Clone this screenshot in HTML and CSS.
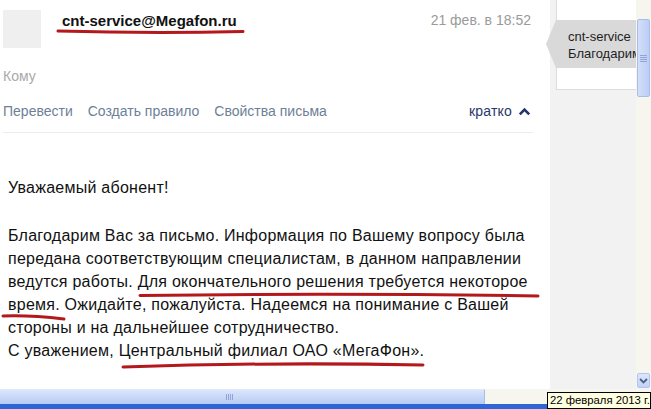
FILE: index.html
```html
<!DOCTYPE html>
<html lang="ru">
<head>
<meta charset="utf-8">
<title>Письмо</title>
<link rel="stylesheet" href="styles.css">
</head>
<body>
<div class="screen">
  <div class="viewport">
    <main class="main">
      <header class="head">
        <div class="avatar"></div>
        <div class="from">cnt-service@Megafon.ru</div>
        <div class="date">21 фев. в 18:52</div>
      </header>
      <div class="to">Кому</div>
      <nav class="actions">
        <span class="link">Перевести</span>
        <span class="link">Создать правило</span>
        <span class="link">Свойства письма</span>
        <span class="brief">кратко
          <svg class="chev" width="13" height="9" viewBox="0 0 13 9"><path d="M1.8 7.4 L6.5 2.6 L11.2 7.4" fill="none" stroke="#24356e" stroke-width="2.6"/></svg>
        </span>
      </nav>
      <div class="letter">
        <p class="greet">Уважаемый абонент!</p>
        <p class="text">Благодарим Вас за письмо. Информация по Вашему вопросу была передана соответствующим специалистам, в данном направлении ведутся работы. Для окончательного решения требуется некоторое время. Ожидайте, пожалуйста. Надеемся на понимание с Вашей стороны и на дальнейшее сотрудничество.<br>С уважением, Центральный филиал ОАО «МегаФон».</p>
      </div>
    </main>
    <aside class="side">
      <div class="preview"></div>
      <div class="bubble">
        <div class="bubble-line">cnt-service</div>
        <div class="bubble-line">Благодарим</div>
      </div>
    </aside>
    <div class="vscroll">
      <div class="vthumb"><span></span><span></span><span></span><span></span></div>
      <div class="vdown">
        <svg width="9" height="6" viewBox="0 0 9 6"><path d="M1 1 L4.5 4.5 L8 1" fill="none" stroke="#4d6185" stroke-width="1.8"/></svg>
      </div>
    </div>
  </div>
  <div class="hscroll">
    <div class="hthumb"><span></span><span></span><span></span><span></span></div>
    <div class="htrack"></div>
  </div>
  <div class="taskbar"></div>
</div>
<div class="tip">22 февраля 2013 г.</div>
<svg class="marks" width="651" height="409" viewBox="0 0 651 409">
  <g fill="none" stroke="#b3191c" stroke-width="3" stroke-linecap="round">
    <path d="M58 31 Q150 33.5 243 31.5"/>
    <path d="M140 295.5 Q340 293 538 296"/>
    <path d="M3 316 Q30 315 64 319"/>
    <path d="M123 367 Q270 362 423 365"/>
  </g>
</svg>
</body>
</html>
```
FILE: styles.css
```css
html, body {
  margin: 0;
  padding: 0;
}
body {
  width: 651px;
  height: 409px;
  overflow: hidden;
  position: relative;
  background: #fff;
  font-family: "Liberation Sans", Arial, sans-serif;
  color: #111;
}
.screen {
  display: flex;
  flex-direction: column;
  height: 409px;
}
.viewport {
  display: flex;
  height: 389px;
}
.main {
  width: 550px;
  flex: none;
  background: #fff;
}
.head {
  display: flex;
  height: 58px;
  padding-right: 19px;
}
.avatar {
  width: 38px;
  height: 38px;
  margin: 10px 0 0 3px;
  background: #efefef;
  flex: none;
}
.from {
  margin: 12px 0 0 21px;
  font-weight: bold;
  font-size: 15px;
  line-height: 17px;
  color: #111;
}
.date {
  margin: 12px 0 0 auto;
  font-size: 14px;
  line-height: 17px;
  color: #9a9a9a;
}
.to {
  margin-top: 9px;
  padding-left: 3px;
  font-size: 14px;
  line-height: 18px;
  color: #a9a9a9;
}
.actions {
  display: flex;
  align-items: center;
  gap: 15px;
  margin: 17px 17px 0 3px;
  height: 18px;
  padding-bottom: 12px;
  border-bottom: 1px solid #ececec;
  font-size: 14px;
  line-height: 18px;
}
.link {
  color: #6e8097;
}
.brief {
  margin-left: auto;
  margin-right: 2px;
  color: #2a386b;
  display: flex;
  align-items: center;
  gap: 6px;
  letter-spacing: 0.2px;
}
.letter {
  padding: 0 0 0 8px;
  margin-top: 43px;
  font-size: 16px;
  line-height: 23px;
  letter-spacing: 0.25px;
  color: #111;
}
.letter p {
  margin: 0;
}
.text {
  margin-top: 25px !important;
  width: 540px;
}
.side {
  width: 86px;
  flex: none;
  background: #f2f2f2;
  position: relative;
}
.preview {
  margin-left: 6px;
  height: 89px;
  background: #fff;
  border-left: 1px solid #dcdcdc;
  border-bottom: 1px solid #dcdcdc;
}
.bubble {
  position: absolute;
  left: 6px;
  top: 20px;
  width: 80px;
  height: 48px;
  background: #d9d9d9;
  box-sizing: border-box;
  padding: 8px 0 0 12px;
  font-size: 13px;
  line-height: 17px;
  color: #1e1e1e;
  white-space: nowrap;
}
.bubble::before {
  content: "";
  position: absolute;
  left: -10px;
  top: 0;
  border-style: solid;
  border-width: 24px 10px 24px 0;
  border-color: transparent #d9d9d9 transparent transparent;
}
.bubble-line {
  overflow: hidden;
  width: 68px;
}
.vscroll {
  width: 15px;
  flex: none;
  background: #f6f6ef;
  position: relative;
  display: flex;
  flex-direction: column;
}
.vthumb {
  margin: 19px 1px 0 1px;
  height: 78px;
  box-sizing: border-box;
  border: 1px solid #a9bde9;
  border-radius: 2px;
  background: linear-gradient(to right, #d3defb, #bccdf5);
  display: flex;
  flex-direction: column;
  justify-content: center;
  align-items: center;
  gap: 1px;
}
.vthumb span {
  display: block;
  width: 7px;
  height: 1px;
  background: #8ea5d6;
}
.vdown {
  margin: auto 1px 1px 1px;
  height: 15px;
  box-sizing: border-box;
  border: 1px solid #b3c5ee;
  border-radius: 2px;
  background: linear-gradient(to bottom, #dce6fc, #c2d2f6);
  display: flex;
  align-items: center;
  justify-content: center;
}
.hscroll {
  height: 15px;
  display: flex;
}
.hthumb {
  width: 485px;
  box-sizing: border-box;
  padding-left: 226px;
  border-top: 1px solid #e2e9fa;
  border-right: 1px solid #a9bde9;
  background: linear-gradient(to bottom, #dbe5fc, #b8cbf5);
  display: flex;
  align-items: center;
  gap: 1px;
}
.hthumb span {
  display: block;
  width: 1px;
  height: 6px;
  background: #8ea5d6;
}
.htrack {
  flex: 1;
  background: #f6f6ef;
}
.taskbar {
  height: 5px;
  background: #2f66d6;
}
.tip {
  position: absolute;
  left: 547px;
  top: 392px;
  width: 104px;
  height: 17px;
  box-sizing: border-box;
  background: #ffffe1;
  border: 1px solid #000;
  font-size: 11.3px;
  line-height: 15px;
  padding-left: 2px;
  color: #000;
  white-space: nowrap;
}
.marks {
  position: absolute;
  left: 0;
  top: 0;
  pointer-events: none;
}
```
